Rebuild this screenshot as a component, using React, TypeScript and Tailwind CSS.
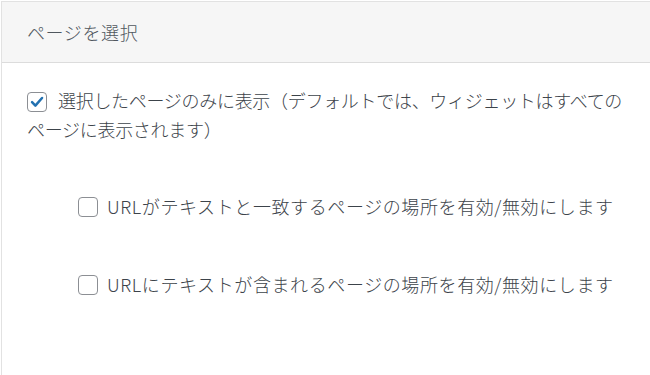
const font = {
  fontFamily: '"Noto Sans CJK JP", "Noto Sans", "Liberation Sans", sans-serif',
};

function Box({ checked }: { checked?: boolean }) {
  return (
    <span className="inline-flex h-[20px] w-[20px] shrink-0 items-center justify-center rounded-[4px] border border-[#8c8f94] bg-white">
      {checked && (
        <svg viewBox="0 0 20 20" className="h-[18px] w-[18px]">
          <path
            d="M4.5 10.2 8.2 14 15.6 5.6"
            fill="none"
            stroke="#2271b1"
            strokeWidth="2.8"
            strokeLinecap="round"
            strokeLinejoin="round"
          />
        </svg>
      )}
    </span>
  );
}

const options = [
  "URLがテキストと一致するページの場所を有効/無効にします",
  "URLにテキストが含まれるページの場所を有効/無効にします",
];

export default function App() {
  return (
    <div className="h-[375px] w-[650px] overflow-hidden bg-white pl-px pt-px" style={font}>
      <div className="h-full border-l border-t border-[#e2e2e2]">
        <div className="flex h-[61px] items-center border-b border-[#dcdcdc] bg-[#f6f6f6] px-[25px] text-[18px] font-light tracking-[0.6px] text-[#50575e]">
          ページを選択
        </div>
        <div className="pl-[25px] pr-[8px] pt-[23px] text-[18px] font-light leading-[29px] text-[#3c434a]">
          <p className="tracking-[-0.3px]">
            <span className="mr-[11px] inline-block translate-y-[3px]">
              <Box checked />
            </span>
            選択したページのみに表示（デフォルトでは、ウィジェットはすべての
            <br />
            ページに表示されます）
          </p>
          <div className="mt-[48px] flex flex-col gap-[49px] pl-[51px]">
            {options.map((o) => (
              <label key={o} className="flex items-center gap-[9px]">
                <Box />
                <span className="tracking-[0.6px]">{o}</span>
              </label>
            ))}
          </div>
        </div>
      </div>
    </div>
  );
}
